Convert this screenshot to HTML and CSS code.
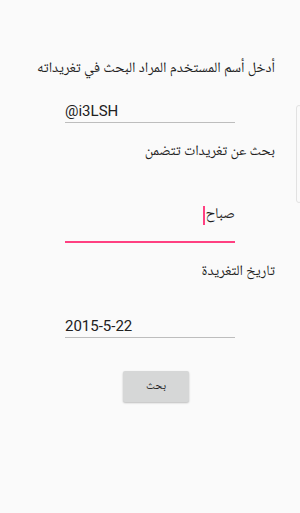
FILE: index.html
```
<!DOCTYPE html>
<html lang="ar">
<head>
    <meta charset="UTF-8">
    <meta name="viewport" content="width=device-width, initial-scale=1.0">
    <title>بحث التغريدات</title>
    <link rel="stylesheet" href="styles.css">
</head>
<body>
    <div class="page">
        <p class="label title">أدخل أسم المستخدم المراد البحث في تغريداته</p>
        <div class="field ltr">@i3LSH</div>

        <p class="label label-words">بحث عن تغريدات تتضمن</p>
        <div class="field field-words focused">
            <span class="word">صباح</span><span class="caret"></span>
        </div>

        <p class="label label-date">تاريخ التغريدة</p>
        <div class="field ltr field-date">2015-5-22</div>

        <button class="search-btn">بحث</button>
    </div>

    <!-- edge panel handle -->
    <div class="edge-handle"></div>
</body>
</html>
```

FILE: styles.css
```
* {
    margin: 0;
    padding: 0;
    box-sizing: border-box;
}

body {
    width: 300px;
    height: 513px;
    background-color: #fafafa;
    font-family: "Noto Naskh Arabic", "Droid Arabic Naskh", "DejaVu Sans", sans-serif;
    color: #212121;
    position: relative;
    overflow: hidden;
}

.page {
    display: flex;
    flex-direction: column;
    padding: 58px 25px 0 25px;
}

.label {
    direction: rtl;
    text-align: right;
    font-size: 14.5px;
    line-height: 20px;
    color: #222;
}

.title {
    margin-top: 1px;
}

.label-words {
    margin-top: 19px;
}

.label-date {
    margin-top: 19px;
}

.field {
    align-self: center;
    width: 170px;
    margin-top: 22px;
    font-size: 15px;
    line-height: 20px;
    padding-bottom: 1px;
    border-bottom: 1px solid #bdbdbd;
}

.ltr {
    font-family: Roboto, "Liberation Sans", sans-serif;
    direction: ltr;
    text-align: left;
}

.field-words {
    direction: rtl;
    display: flex;
    align-items: center;
    margin-top: 43px;
    padding-bottom: 16px;
    border-bottom: 2px solid #ff4081;
}

.word {
    font-size: 15px;
}

.caret {
    display: inline-block;
    width: 2px;
    height: 19px;
    margin-right: 0;
    background-color: #ff4081;
}

.field-date {
    margin-top: 34px;
}

.search-btn {
    align-self: center;
    margin-top: 33px;
    margin-left: 12px;
    width: 66px;
    height: 31px;
    border: none;
    border-radius: 2px;
    background-color: #d6d7d7;
    box-shadow: 0 1px 2px rgba(0, 0, 0, 0.25);
    font-family: "Noto Naskh Arabic", "DejaVu Sans", sans-serif;
    font-size: 11.5px;
    color: #222;
}

.edge-handle {
    position: absolute;
    top: 105px;
    right: -2px;
    width: 6px;
    height: 98px;
    border: 1px solid #e2e2e2;
    border-radius: 4px;
    background-color: #fafafa;
}
```
